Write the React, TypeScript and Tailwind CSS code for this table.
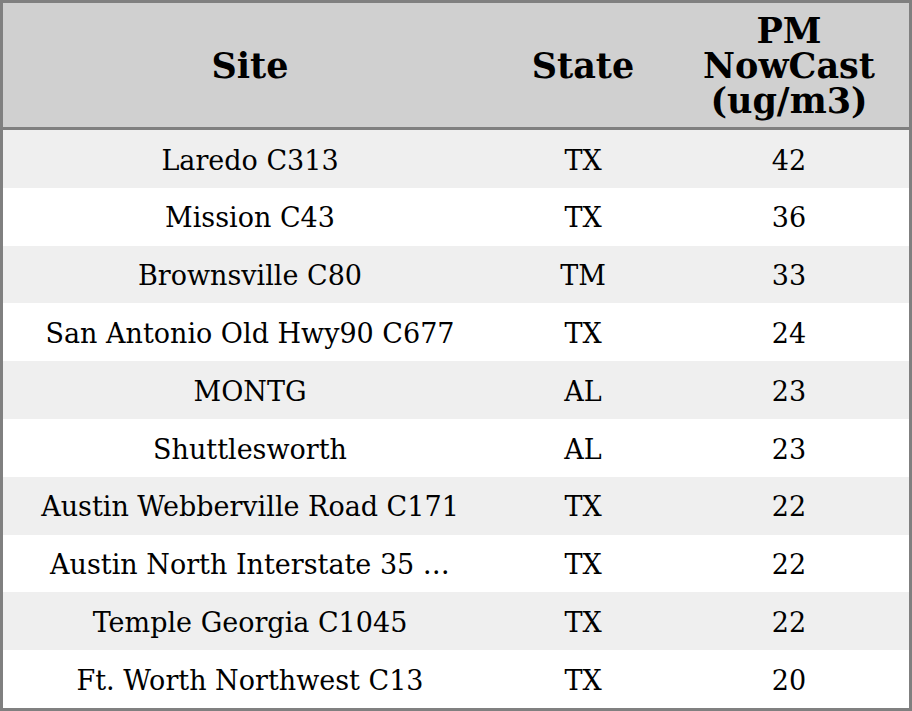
const rows: [string, string, string][] = [
  ["Laredo C313", "TX", "42"],
  ["Mission C43", "TX", "36"],
  ["Brownsville C80", "TM", "33"],
  ["San Antonio Old Hwy90 C677", "TX", "24"],
  ["MONTG", "AL", "23"],
  ["Shuttlesworth", "AL", "23"],
  ["Austin Webberville Road C171", "TX", "22"],
  ["Austin North Interstate 35 …", "TX", "22"],
  ["Temple Georgia C1045", "TX", "22"],
  ["Ft. Worth Northwest C13", "TX", "20"],
];

export default function App() {
  return (
    <div className="h-[711px] w-[912px] border-[3px] border-[#808080] bg-white font-['DejaVu_Serif',serif] text-black">
      <div className="grid h-[127px] grid-cols-[494px_172px_240px] items-center border-b-[3px] border-[#808080] bg-[#d0d0d0] text-center text-[35px] font-bold leading-[35px]">
        <div>Site</div>
        <div>State</div>
        <div>
          PM
          <br />
          NowCast
          <br />
          (ug/m3)
        </div>
      </div>
      {rows.map(([site, state, pm], i) => (
        <div
          key={i}
          className={`grid h-[57.8px] grid-cols-[494px_172px_240px] items-center pt-1 text-center text-[27px] ${
            i % 2 === 0 ? "bg-[#efefef]" : "bg-white"
          }`}
        >
          <div className="whitespace-nowrap">{site}</div>
          <div>{state}</div>
          <div>{pm}</div>
        </div>
      ))}
    </div>
  );
}
